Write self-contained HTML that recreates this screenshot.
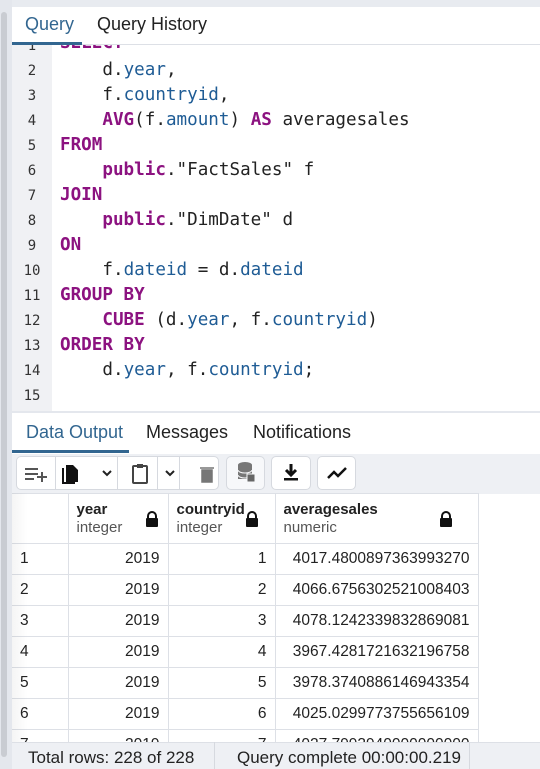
<!DOCTYPE html>
<html><head><style>
*{margin:0;padding:0;box-sizing:border-box}
body{width:540px;height:769px;overflow:hidden;background:#fff;font-family:"Liberation Sans",Roboto,sans-serif;position:relative}
.abs{position:absolute}
.code{font-family:"DejaVu Sans Mono","Liberation Mono",monospace;font-size:17.6px;white-space:pre;position:absolute;left:0;top:45px;width:540px;height:366px;overflow:hidden}
.k{color:#8c1280;font-weight:bold}
.i{color:#1f5c95}
.t{color:#222}
.ln{position:absolute;left:12px;width:40px;text-align:center;font-family:"DejaVu Sans Mono",monospace;font-size:14px;color:#333}
.cl{position:absolute;left:60px}
table{border-collapse:collapse;font-size:15.5px;color:#222}
td{border:1px solid #dde0e6;height:31px;padding:0 8px}
</style></head><body>
<div class="abs" style="left:0;top:0;width:540px;height:7px;background:#e8ebf0"></div>
<div class="abs" style="left:0;top:0;width:12px;height:769px;background:#e4e7ed"></div>
<div class="abs" style="left:1px;top:12px;width:6px;height:745px;background:#c9ccd2;border-radius:3px"></div>
<!-- tabs -->
<div class="abs" style="left:12px;top:7px;width:528px;height:38px;border-bottom:1px solid #dde0e6"></div>
<div class="abs" style="left:25px;top:14px;font-size:18px;color:#326690">Query</div>
<div class="abs" style="left:12px;top:42px;width:70px;height:3px;background:#326690"></div>
<div class="abs" style="left:97px;top:14px;font-size:18px;color:#222">Query History</div>
<!-- gutter -->
<div class="abs" style="left:12px;top:45px;width:40px;height:366px;background:#f0f1f4"></div>
<div class="code">
<div class="ln" style="top:-7px">1</div><div class="cl" style="top:-12px"><span class="k">SELECT</span></div>
<div class="ln" style="top:18px">2</div><div class="cl" style="top:15px">    <span class="t">d.</span><span class="i">year</span><span class="t">,</span></div>
<div class="ln" style="top:43px">3</div><div class="cl" style="top:40px">    <span class="t">f.</span><span class="i">countryid</span><span class="t">,</span></div>
<div class="ln" style="top:68px">4</div><div class="cl" style="top:65px">    <span class="k">AVG</span><span class="t">(f.</span><span class="i">amount</span><span class="t">) </span><span class="k">AS</span><span class="t"> averagesales</span></div>
<div class="ln" style="top:93px">5</div><div class="cl" style="top:90px"><span class="k">FROM</span></div>
<div class="ln" style="top:118px">6</div><div class="cl" style="top:115px">    <span class="k">public</span><span class="t">."FactSales" f</span></div>
<div class="ln" style="top:143px">7</div><div class="cl" style="top:140px"><span class="k">JOIN</span></div>
<div class="ln" style="top:168px">8</div><div class="cl" style="top:165px">    <span class="k">public</span><span class="t">."DimDate" d</span></div>
<div class="ln" style="top:193px">9</div><div class="cl" style="top:190px"><span class="k">ON</span></div>
<div class="ln" style="top:218px">10</div><div class="cl" style="top:215px">    <span class="t">f.</span><span class="i">dateid</span><span class="t"> = d.</span><span class="i">dateid</span></div>
<div class="ln" style="top:243px">11</div><div class="cl" style="top:240px"><span class="k">GROUP BY</span></div>
<div class="ln" style="top:268px">12</div><div class="cl" style="top:265px">    <span class="k">CUBE</span><span class="t"> (d.</span><span class="i">year</span><span class="t">, f.</span><span class="i">countryid</span><span class="t">)</span></div>
<div class="ln" style="top:293px">13</div><div class="cl" style="top:290px"><span class="k">ORDER BY</span></div>
<div class="ln" style="top:318px">14</div><div class="cl" style="top:315px">    <span class="t">d.</span><span class="i">year</span><span class="t">, f.</span><span class="i">countryid</span><span class="t">;</span></div>
<div class="ln" style="top:343px">15</div>
</div>
<!-- output tabs -->
<div class="abs" style="left:12px;top:411px;width:528px;height:2px;background:#e4e7ed"></div>
<div class="abs" style="left:12px;top:413px;width:528px;height:42px;border-bottom:1px solid #dde0e6"></div>
<div class="abs" style="left:26px;top:422px;font-size:18px;color:#326690">Data Output</div>
<div class="abs" style="left:12px;top:450px;width:117px;height:3px;background:#326690"></div>
<div class="abs" style="left:146px;top:422px;font-size:18px;color:#222">Messages</div>
<div class="abs" style="left:253px;top:422px;font-size:18px;color:#222">Notifications</div>
<!-- toolbar -->
<div class="abs" style="left:12px;top:454px;width:528px;height:40px;background:#eef0f4"></div>
<div class="abs" style="left:16px;top:456px;width:203px;height:34px;background:#fff;border:1px solid #d6d9df;border-radius:5px"></div>
<div class="abs" style="left:55px;top:456px;width:1px;height:34px;background:#d6d9df"></div>
<div class="abs" style="left:117px;top:456px;width:1px;height:34px;background:#d6d9df"></div>
<div class="abs" style="left:157px;top:456px;width:1px;height:34px;background:#d6d9df"></div>
<div class="abs" style="left:179px;top:456px;width:1px;height:34px;background:#d6d9df"></div>
<svg class="abs" style="left:16px;top:456px" width="203" height="34">
<g stroke="#555" stroke-width="2" fill="none"><path d="M9 13h13M9 18h13M9 23h9M21 21h10M26 16v10"/></g>
<path d="M50 9h7l5 5v12h-12z" fill="#111"/><path d="M47 12v15h12" stroke="#111" stroke-width="2" fill="none"/>
<path d="M87 15l4 4 4-4M150 15l4 4 4-4" stroke="#222" stroke-width="2" fill="none"/>
<rect x="117" y="10" width="14" height="17" rx="1" stroke="#444" stroke-width="2" fill="none"/><rect x="121" y="8" width="6" height="4" fill="#444"/>
<path d="M184 12h14M186 14h10v12h-10z" fill="#777" stroke="#777" stroke-width="1.5"/>
</svg>
<div class="abs" style="left:226px;top:456px;width:39px;height:34px;background:#f7f8fa;border:1px solid #d6d9df;border-radius:5px"></div>
<svg class="abs" style="left:236px;top:461px" width="20" height="24"><ellipse cx="9" cy="4" rx="7" ry="3" fill="#777"/><rect x="2" y="4" width="14" height="14" fill="#777"/><path d="M2 9a7 3 0 0 0 14 0M2 14a7 3 0 0 0 14 0" stroke="#f7f8fa" fill="none"/><rect x="11" y="13" width="8" height="8" fill="#666" stroke="#f7f8fa"/></svg>
<div class="abs" style="left:271px;top:456px;width:40px;height:34px;background:#fff;border:1px solid #d6d9df;border-radius:5px"></div>
<svg class="abs" style="left:281px;top:461px" width="20" height="24"><path d="M10 3v10M5 9l5 5 5-5" stroke="#111" stroke-width="3" fill="none"/><rect x="3" y="17" width="14" height="2.5" fill="#111"/></svg>
<div class="abs" style="left:317px;top:456px;width:39px;height:34px;background:#fff;border:1px solid #d6d9df;border-radius:5px"></div>
<svg class="abs" style="left:325px;top:461px" width="24" height="24"><path d="M3 17l6-6 4 4 8-8" stroke="#111" stroke-width="2.5" fill="none"/></svg>
<!-- table -->
<table class="abs" style="left:12px;top:493px">
<tr style="height:50px"><td style="width:56px;height:50px;border-left:none"></td>
<td style="width:100px;height:50px"><b style="font-size:15px">year</b><br><span style="color:#555;font-size:15px">integer</span></td>
<td style="width:107px;height:50px"><b style="font-size:15px">countryid</b><br><span style="color:#555;font-size:15px">integer</span></td>
<td style="width:203px;height:50px"><b style="font-size:15px">averagesales</b><br><span style="color:#555;font-size:15px">numeric</span></td></tr>
<tr><td style="border-left:none">1</td><td align="right">2019</td><td align="right">1</td><td align="right">4017.4800897363993270</td></tr>
<tr><td style="border-left:none">2</td><td align="right">2019</td><td align="right">2</td><td align="right">4066.6756302521008403</td></tr>
<tr><td style="border-left:none">3</td><td align="right">2019</td><td align="right">3</td><td align="right">4078.1242339832869081</td></tr>
<tr><td style="border-left:none">4</td><td align="right">2019</td><td align="right">4</td><td align="right">3967.4281721632196758</td></tr>
<tr><td style="border-left:none">5</td><td align="right">2019</td><td align="right">5</td><td align="right">3978.3740886146943354</td></tr>
<tr><td style="border-left:none">6</td><td align="right">2019</td><td align="right">6</td><td align="right">4025.0299773755656109</td></tr>
<tr><td style="border-left:none">7</td><td align="right">2019</td><td align="right">7</td><td align="right">4027.7993940000000000</td></tr>
</table>
<svg class="abs" style="left:145px;top:511px" width="14" height="16"><path d="M3 7V5a4 4 0 0 1 8 0v2" stroke="#111" stroke-width="2" fill="none"/><rect x="1" y="7" width="12" height="9" rx="1" fill="#111"/></svg>
<svg class="abs" style="left:245px;top:511px" width="14" height="16"><path d="M3 7V5a4 4 0 0 1 8 0v2" stroke="#111" stroke-width="2" fill="none"/><rect x="1" y="7" width="12" height="9" rx="1" fill="#111"/></svg>
<svg class="abs" style="left:439px;top:511px" width="14" height="16"><path d="M3 7V5a4 4 0 0 1 8 0v2" stroke="#111" stroke-width="2" fill="none"/><rect x="1" y="7" width="12" height="9" rx="1" fill="#111"/></svg>
<div class="abs" style="left:12px;top:493px;width:16px;height:250px;background:linear-gradient(90deg,rgba(0,0,0,0.04),rgba(0,0,0,0))"></div>
<!-- status -->
<div class="abs" style="left:12px;top:742px;width:528px;height:27px;background:#eef0f4;border-top:1px solid #dde0e6"></div>
<div class="abs" style="left:214px;top:742px;width:1px;height:27px;background:#d6d9df"></div>
<div class="abs" style="left:469px;top:742px;width:1px;height:27px;background:#d6d9df"></div>
<div class="abs" style="left:28px;top:748px;font-size:17px;color:#222">Total rows: 228 of 228</div>
<div class="abs" style="left:237px;top:748px;font-size:17px;color:#222">Query complete 00:00:00.219</div>
</body></html>
